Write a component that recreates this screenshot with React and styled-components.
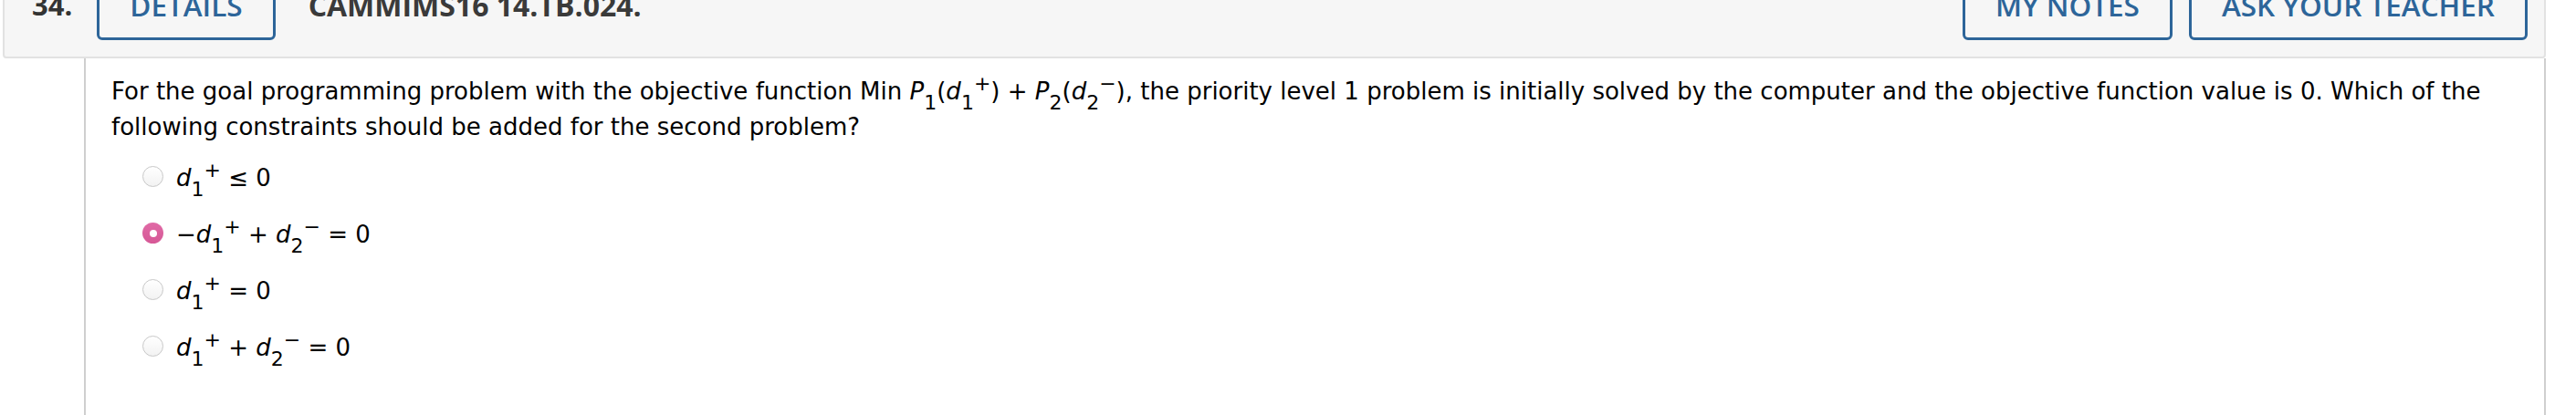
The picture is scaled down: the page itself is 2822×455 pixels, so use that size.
import React from 'react';
import styled, { createGlobalStyle } from 'styled-components';

const GlobalStyle = createGlobalStyle`
    body {
        margin: 0;
        background: #ffffff;
    }
`;

const Question = styled.div`
    width: 2786px;
    margin-left: 3px;
    font-family: Verdana, "DejaVu Sans", sans-serif;
    color: #000000;
`;

const Header = styled.div`
    display: flex;
    align-items: center;
    margin-top: -53px;
    padding: 18px 18px 18px 30px;

    background: #f6f6f6;
    border: 2px solid #e2e2e2;
    border-radius: 4px;
    font-family: "Open Sans", sans-serif;
`;

const Number = styled.span`
    margin-right: 27px;
    font-size: 31px;
    font-weight: 700;
    line-height: 41px;
    color: #333333;
`;

const Title = styled.span`
    flex: 1;
    margin-left: 36px;
    font-size: 32px;
    font-weight: 700;
    line-height: 41px;
    color: #3a3a3a;
`;

const Actions = styled.div`
    display: flex;
    gap: 18px;
`;

const Button = styled.button`
    padding: 15px 33px;
    font-family: "Open Sans", sans-serif;
    font-size: 31.5px;
    font-weight: 600;
    line-height: 41px;
    text-transform: uppercase;
    color: #2d6599;
    background: transparent;
    border: 3px solid #2d6599;
    border-radius: 6px;
`;

const Body = styled.div`
    min-height: 420px;
    margin-left: 89px;
    padding: 17px 30px 0 28px;

    border-left: 2px solid #cfcfcf;
    border-right: 2px solid #cfcfcf;
    font-size: 26px;
    line-height: 39px;
`;

const Prompt = styled.p`
    margin: 0;
`;

const Var = styled.i`
    font-style: italic;
`;

const Sub = styled.sub`
    font-size: 22px;
    line-height: 0;
    vertical-align: -11px;
`;

const Sup = styled.sup`
    font-size: 22px;
    line-height: 0;
    vertical-align: 10px;
`;

const Options = styled.div`
    display: flex;
    flex-direction: column;
    margin-top: 5px;
    padding-left: 34px;
`;

const Option = styled.label`
    display: flex;
    align-items: center;
    gap: 14px;
    height: 62px;
`;

const Radio = styled.span`
    position: relative;
    flex: none;
    box-sizing: border-box;
    width: 23px;
    height: 23px;
    margin-top: -3px;
    border-radius: 50%;
    border: ${p => (p.$checked ? 'none' : '1px solid #c8c8c8')};
    background: ${p => (p.$checked
        ? 'linear-gradient(#e06aa6, #d65896)'
        : 'linear-gradient(#ffffff, #f2f2f2)')};

    &::after {
        content: '';
        display: ${p => (p.$checked ? 'block' : 'none')};
        position: absolute;
        top: 7.5px;
        left: 7.5px;
        width: 8px;
        height: 8px;
        border-radius: 50%;
        background: #ffffff;
    }
`;

const D = ({ n, sign }) => (
    <>
        <Var>d</Var>
        <Sub>{n}</Sub>
        <Sup>{sign}</Sup>
    </>
);

const choices = [
    { key: 'a', body: <><D n="1" sign="+" /> ≤ 0</> },
    { key: 'b', body: <>−<D n="1" sign="+" /> + <D n="2" sign="−" /> = 0</>, checked: true },
    { key: 'c', body: <><D n="1" sign="+" /> = 0</> },
    { key: 'd', body: <><D n="1" sign="+" /> + <D n="2" sign="−" /> = 0</> },
];

export default function App() {
    return (
        <>
            <GlobalStyle />
            <Question>
                <Header>
                    <Number>34.</Number>
                    <Button>Details</Button>
                    <Title>CAMMIMS16 14.TB.024.</Title>
                    <Actions>
                        <Button>My Notes</Button>
                        <Button>Ask Your Teacher</Button>
                    </Actions>
                </Header>
                <Body>
                    <Prompt>
                        For the goal programming problem with the objective function Min{' '}
                        <Var>P</Var><Sub>1</Sub>(<D n="1" sign="+" />) + <Var>P</Var><Sub>2</Sub>(<D n="2" sign="−" />),
                        the priority level 1 problem is initially solved by the computer and the objective
                        function value is 0. Which of the following constraints should be added for the
                        second problem?
                    </Prompt>
                    <Options>
                        {choices.map(c => (
                            <Option key={c.key}>
                                <Radio $checked={c.checked} />
                                <span>{c.body}</span>
                            </Option>
                        ))}
                    </Options>
                </Body>
            </Question>
        </>
    );
}
